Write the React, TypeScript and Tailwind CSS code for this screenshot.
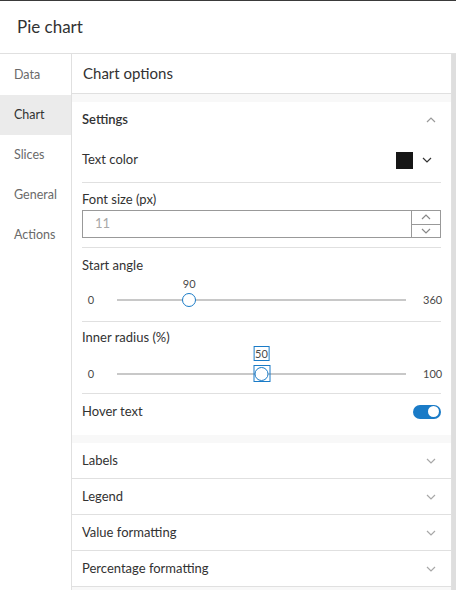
import React from "react";

const font = { fontFamily: "Lato, 'Open Sans', 'Noto Sans', sans-serif" };

function Chevron({ up = false, className = "" }: { up?: boolean; className?: string }) {
  return (
    <svg width="10" height="6" viewBox="0 0 10 6" className={className}>
      <polyline
        points={up ? "1,5 5,1 9,5" : "1,1 5,5 9,1"}
        fill="none"
        stroke="currentColor"
        strokeWidth="1.2"
      />
    </svg>
  );
}

type SliderProps = {
  min: number;
  max: number;
  value: number;
  focused?: boolean;
};

function Slider({ min, max, value, focused }: SliderProps) {
  const pct = ((value - min) / (max - min)) * 100;
  return (
    <div className="flex items-end text-[11px] text-[#4a4a4a]">
      <span className="w-[18px] text-center leading-[18px]">{min}</span>
      <div className={["relative mx-[17px] flex-1", focused ? "h-[37px]" : "h-[33px]"].join(" ")}>
        <div className="absolute left-0 right-0 bottom-[8px] h-[2px] bg-[#c8c8c8]" />
        <div className="absolute -translate-x-1/2 top-0" style={{ left: `${pct}%` }}>
          {focused ? (
            <span className="inline-block h-[15px] leading-[13px] px-[1px] border-[1.5px] border-[#1a7bc7]">
              {value}
            </span>
          ) : (
            <span className="leading-[14px]">{value}</span>
          )}
        </div>
        <div
          className={[
            "absolute -translate-x-1/2 flex items-center justify-center",
            focused ? "bottom-[1px] w-[17px] h-[17px] border-[1.5px] border-[#1a7bc7]" : "bottom-[2px]",
          ].join(" ")}
          style={{ left: `${pct}%` }}
        >
          <div className="w-[14px] h-[14px] rounded-full bg-white border-[1.5px] border-[#1a7bc7]" />
        </div>
      </div>
      <span className="w-[18px] text-right leading-[18px]">{max}</span>
    </div>
  );
}

const navItems = ["Data", "Chart", "Slices", "General", "Actions"];
const collapsed = ["Labels", "Legend", "Value formatting", "Percentage formatting"];

export default function App() {
  return (
    <div className="w-[456px] h-[590px] overflow-hidden bg-white flex flex-col text-[#323232]" style={font}>
      <div className="h-[1px] bg-[#3a3a3a]" />
      {/* Header */}
      <div className="h-[53px] flex items-center px-[17px] border-b border-[#e0e0e0] text-[17px]">
        Pie chart
      </div>

      <div className="flex flex-1 min-h-0">
        {/* Side nav */}
        <div className="w-[72px] border-r border-[#e0e0e0] flex flex-col pt-[1px]">
          {navItems.map((item) => (
            <div
              key={item}
              className={[
                "h-[40px] flex items-center pl-[14px] text-[12.5px]",
                item === "Chart" ? "bg-[#ebebeb] text-[#323232]" : "text-[#6a6a6a]",
              ].join(" ")}
            >
              {item}
            </div>
          ))}
        </div>

        {/* Main panel */}
        <div className="flex-1 flex min-w-0">
          <div className="flex-1 flex flex-col border-r border-[#e0e0e0] bg-[#f8f8f8] min-w-0">
            <div className="h-[40px] shrink-0 flex items-center px-[11px] border-b border-[#e0e0e0] text-[15px] bg-white">
              Chart options
            </div>
            <div className="h-[8px] shrink-0" />

            {/* Settings */}
            <div className="bg-white px-[10px] shrink-0">
              <div className="h-[36px] flex items-center justify-between font-semibold text-[13px]">
                <span>Settings</span>
                <Chevron up className="text-[#9a9a9a] mr-[5px]" />
              </div>

              <div className="h-[45px] flex items-center justify-between border-b border-[#e0e0e0] text-[13px]">
                <span>Text color</span>
                <div className="flex items-center gap-[9px] mr-[9px]">
                  <div className="w-[17px] h-[17px] bg-[#161616]" />
                  <Chevron className="text-[#333]" />
                </div>
              </div>

              <div className="pt-[7px] pb-[9px] border-b border-[#e0e0e0]">
                <div className="text-[13px] leading-[18px]">Font size (px)</div>
                <div className="mt-[2px] h-[28px] flex border border-[#999]">
                  <div className="flex-1 flex items-center pl-[12px] text-[13px] text-[#a8a8a8]">11</div>
                  <div className="w-[29px] border-l border-[#999] flex flex-col">
                    <div className="flex-1 flex items-center justify-center border-b border-[#999] text-[#888]">
                      <Chevron up />
                    </div>
                    <div className="flex-1 flex items-center justify-center text-[#888]">
                      <Chevron />
                    </div>
                  </div>
                </div>
              </div>

              <div className="pt-[8px] pb-[12px] border-b border-[#e0e0e0]">
                <div className="text-[13px] leading-[18px]">Start angle</div>
                <div className="mt-[2px]">
                  <Slider min={0} max={360} value={90} />
                </div>
              </div>

              <div className="pt-[6px] pb-[10px] border-b border-[#e0e0e0]">
                <div className="text-[13px] leading-[18px]">Inner radius (%)</div>
                <Slider min={0} max={100} value={50} focused />
              </div>

              <div className="h-[41px] flex items-center justify-between text-[13px] pb-[6px]">
                <span>Hover text</span>
                <div className="w-[28px] h-[14px] rounded-full bg-[#1a7bc7] flex items-center justify-end pr-[2px]">
                  <div className="w-[11px] h-[11px] rounded-full bg-white" />
                </div>
              </div>
            </div>

            <div className="h-[8px] shrink-0" />

            {collapsed.map((label) => (
              <div
                key={label}
                className="h-[36px] shrink-0 bg-white border-b border-[#e0e0e0] flex items-center justify-between px-[10px] text-[13px]"
              >
                <span>{label}</span>
                <Chevron className="text-[#a8a8a8] mr-[5px]" />
              </div>
            ))}
          </div>
          <div className="w-[4px] bg-[#dedede]" />
        </div>
      </div>
    </div>
  );
}
